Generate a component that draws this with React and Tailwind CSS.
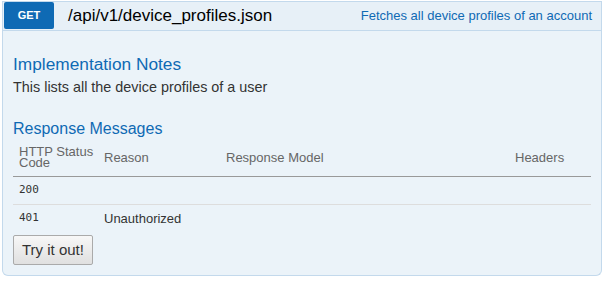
import React from 'react';

const rows = [
  { code: '200', reason: '' },
  { code: '401', reason: 'Unauthorized' },
];

function App() {
  return (
    <div className="w-[612px] h-[284px] bg-white pt-px pl-[2px] font-['Liberation_Sans',Arial,sans-serif]">
      <div className="w-[600px]">
        {/* heading bar */}
        <div className="flex items-center h-[30px] bg-[#e7f0f7] border border-[#c3d9ec] pr-[9px]">
          <span className="flex items-center justify-center w-[50px] h-[27px] -mt-px ml-px bg-[#0f6ab4] text-white text-[11px] font-bold rounded-[2px]">GET</span>
          <span className="ml-[14px] text-[17px] text-black">/api/v1/device_profiles.json</span>
          <span className="ml-auto text-[13px] text-[#0f6ab4]">Fetches all device profiles of an account</span>
        </div>
        {/* content */}
        <div className="bg-[#ebf3f9] border border-t-0 border-[#c3d9ec] rounded-b-[6px] px-[10px] pt-[23px] pb-[10px]">
          <h4 className="text-[17.3px] leading-[20px] text-[#0f6ab4]">Implementation Notes</h4>
          <p className="mt-[4px] text-[14.4px] leading-[18px] text-[#333]">This lists all the device profiles of a user</p>
          <h4 className="mt-[23px] text-[16px] leading-[20px] text-[#0f6ab4]">Response Messages</h4>
          <table className="w-[578px] text-[13px] border-collapse table-fixed">
            <thead>
              <tr className="h-[37px] border-b border-[#999] text-[#666] text-left align-middle">
                <th className="font-normal pl-[6px] leading-[11px] w-[85px] whitespace-nowrap">HTTP Status<br />Code</th>
                <th className="font-normal px-[6px] w-[122px]">Reason</th>
                <th className="font-normal px-[6px]">Response Model</th>
                <th className="font-normal px-[6px] w-[82px]">Headers</th>
              </tr>
            </thead>
            <tbody>
              {rows.map((r, i) => (
                <tr key={r.code} className={i === 0 ? 'border-b border-[#ddd] h-[28px]' : 'h-[28px]'}>
                  <td className="px-[6px] font-['DejaVu_Sans_Mono',monospace] text-[11px] text-[#333]">{r.code}</td>
                  <td className="px-[6px] text-[#333]">{r.reason}</td>
                  <td></td>
                  <td></td>
                </tr>
              ))}
            </tbody>
          </table>
          <button className="mt-[3px] h-[30px] px-[8px] text-[15px] text-[#333] border border-[#aaa] rounded-[2px] bg-gradient-to-b from-[#f7f7f7] to-[#e0e0e0]">Try it out!</button>
        </div>
      </div>
    </div>
  );
}

export default App;
